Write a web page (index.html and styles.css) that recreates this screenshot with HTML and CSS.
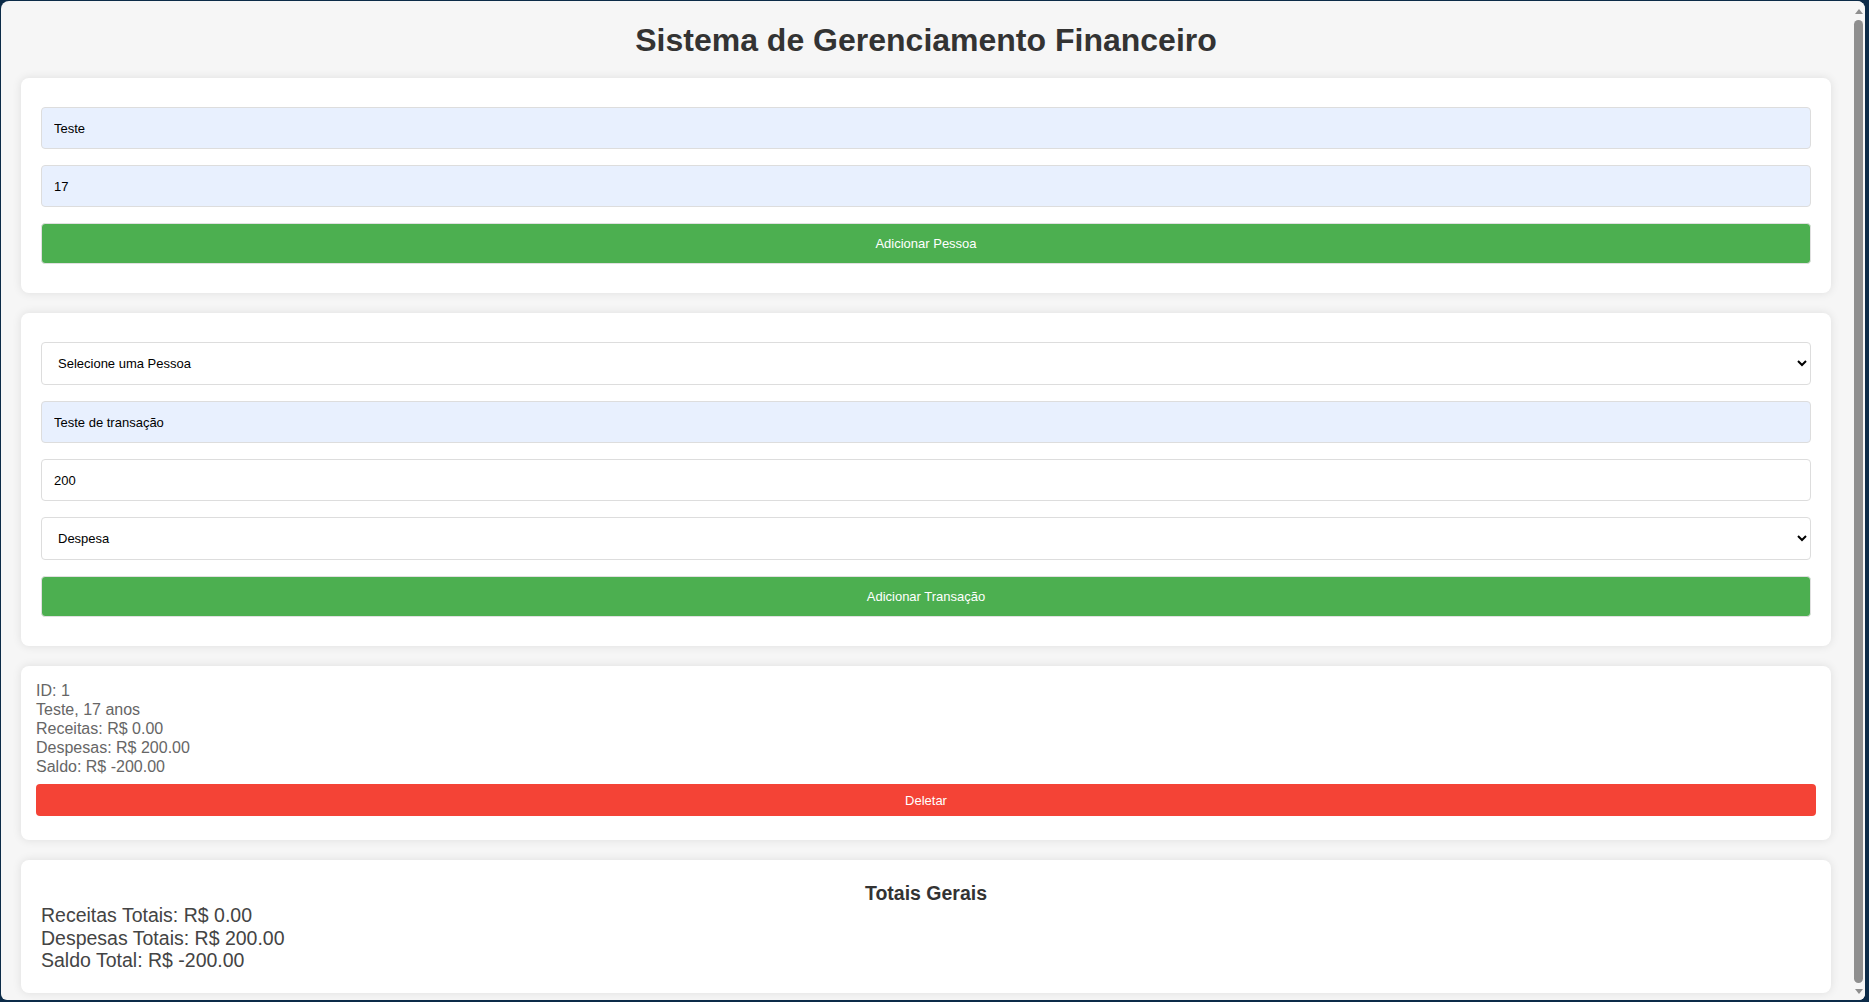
FILE: index.html
```html
<!DOCTYPE html>
<html lang="pt-BR">
<head>
<meta charset="utf-8">
<title>Sistema de Gerenciamento Financeiro</title>
<link rel="stylesheet" href="styles.css">
</head>
<body>
<div class="frame">
  <div class="viewport">
    <main class="page">
      <h1 class="title">Sistema de Gerenciamento Financeiro</h1>

      <section class="card form-card">
        <input class="field autofill" type="text" value="Teste">
        <input class="field autofill" type="text" value="17">
        <button class="btn btn-green">Adicionar Pessoa</button>
      </section>

      <section class="card form-card">
        <select class="field select">
          <option>Selecione uma Pessoa</option>
        </select>
        <input class="field autofill" type="text" value="Teste de transação">
        <input class="field" type="text" value="200">
        <select class="field select">
          <option>Despesa</option>
          <option>Receita</option>
        </select>
        <button class="btn btn-green">Adicionar Transação</button>
      </section>

      <section class="card person-card">
        <div class="person-info">
          <div>ID: 1</div>
          <div>Teste, 17 anos</div>
          <div>Receitas: R$ 0.00</div>
          <div>Despesas: R$ 200.00</div>
          <div>Saldo: R$ -200.00</div>
        </div>
        <button class="btn btn-red">Deletar</button>
      </section>

      <section class="card totals-card">
        <h3 class="totals-title">Totais Gerais</h3>
        <div class="totals-lines">
          <div>Receitas Totais: R$ 0.00</div>
          <div>Despesas Totais: R$ 200.00</div>
          <div>Saldo Total: R$ -200.00</div>
        </div>
      </section>
    </main>
    <div class="scrollbar">
      <span class="arrow arrow-up"></span>
      <div class="thumb"></div>
      <span class="arrow arrow-down"></span>
    </div>
  </div>
</div>
</body>
</html>
```

FILE: styles.css
```css
* { box-sizing: border-box; }

html, body {
  margin: 0;
  height: 100%;
  overflow: hidden;
}

body {
  background: #0c2b48;
  font-family: "Liberation Sans", Arial, sans-serif;
}

.frame {
  height: 1002px;
  padding: 1px 4px 2px 1px;
}

.viewport {
  height: 100%;
  background: #f6f6f6;
  border-radius: 8px 8px 6px 6px;
  display: flex;
  overflow: hidden;
}

.page {
  flex: 1;
  padding: 0 21px 0 20px;
  min-width: 0;
}

.title {
  margin: 21px 0 19px;
  text-align: center;
  font-size: 32px;
  font-weight: bold;
  color: #333;
  line-height: 37px;
}

.card {
  background: #fff;
  border-radius: 8px;
  box-shadow: 0 0 10px rgba(0, 0, 0, 0.1);
  margin-bottom: 20px;
}

.form-card {
  padding: 29px 20px 29px;
  display: flex;
  flex-direction: column;
  gap: 16px;
}

.field {
  display: block;
  width: 100%;
  height: 42px;
  padding: 0 12px;
  border: 1px solid #ddd;
  border-radius: 4px;
  background: #fff;
  font-family: "Liberation Sans", Arial, sans-serif;
  font-size: 13px;
  color: #000;
}

.autofill {
  background: #e8f0fe;
}

.select {
  height: 43px;
  padding: 0 12px 0 12px;
}

.btn {
  display: block;
  width: 100%;
  border: none;
  color: #fff;
  font-family: "Liberation Sans", Arial, sans-serif;
  font-size: 13px;
  border-radius: 4px;
  cursor: pointer;
}

.btn-green {
  background: #4caf50;
  height: 41px;
  border: 1px solid #e0e0e0;
}

.person-card {
  padding: 15px 15px 24px;
}

.person-info {
  font-size: 16px;
  line-height: 19px;
  color: #666;
  margin-bottom: 8px;
}

.btn-red {
  background: #f44336;
  height: 32px;
}

.totals-card {
  padding: 22px 20px 21px;
}

.totals-title {
  margin: 0;
  text-align: center;
  font-size: 19.5px;
  line-height: 22px;
  color: #333;
}

.totals-lines {
  font-size: 19.5px;
  line-height: 22.5px;
  color: #444;
}

.scrollbar {
  width: 13px;
  flex: none;
  display: flex;
  flex-direction: column;
  align-items: center;
  padding: 8px 0 6px;
  background: #f6f6f6;
}

.thumb {
  flex: 1;
  width: 9px;
  margin: 6px 0;
  background: #8f8f8f;
  border-radius: 5px;
}

.arrow {
  width: 0;
  height: 0;
  border-left: 4px solid transparent;
  border-right: 4px solid transparent;
}

.arrow-up {
  border-bottom: 5px solid #8f8f8f;
}

.arrow-down {
  border-top: 5px solid #8f8f8f;
}
```
